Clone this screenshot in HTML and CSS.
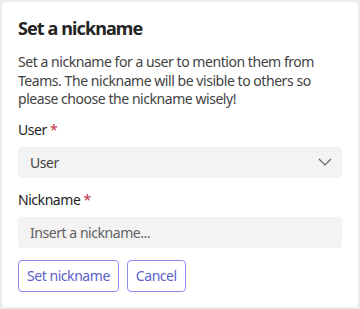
FILE: index.html
```html
<!DOCTYPE html>
<html lang="en">
<head>
<meta charset="utf-8">
<link rel="stylesheet" href="styles.css">
</head>
<body>
<div class="card">
  <h1 class="title">Set a nickname</h1>
  <p class="desc">Set a nickname for a user to mention them from Teams. The nickname will be visible to others so please choose the nickname wisely!</p>
  <div class="field">
    <label class="label">User <span class="req">*</span></label>
    <div class="select">
      <span>User</span>
      <svg class="chev" width="14" height="8" viewBox="0 0 14 8"><path d="M1 1l6 6 6-6" fill="none" stroke="#616161" stroke-width="1.2"/></svg>
    </div>
  </div>
  <div class="field">
    <label class="label">Nickname <span class="req">*</span></label>
    <div class="input">Insert a nickname...</div>
  </div>
  <div class="actions">
    <button class="btn">Set nickname</button>
    <button class="btn">Cancel</button>
  </div>
</div>
</body>
</html>
```
FILE: styles.css
```css
html, body { margin: 0; padding: 0; }
body {
  background: #ececec;
  padding: 2px;
  font-family: "Noto Sans", sans-serif;
  color: #242424;
  width: 360px;
  height: 309px;
  box-sizing: border-box;
  letter-spacing: -0.45px;
}
.card {
  background: #fff;
  border-radius: 4px;
  height: 305px;
  width: 356px;
  box-sizing: border-box;
  padding: 14px 16px 16px 16px;
}
.title {
  margin: 0;
  font-size: 18px;
  line-height: 24px;
  font-weight: 700;
  color: #242424;
  letter-spacing: -0.9px;
}
.desc {
  margin: 13px 0 0 0;
  font-size: 14px;
  line-height: 18.5px;
  color: #424242;
}
.field { margin-top: 11px; }
.field + .field { margin-top: 12px; }
.label {
  display: block;
  font-size: 14px;
  line-height: 20px;
  color: #242424;
}
.req { color: #c4314b; }
.select, .input {
  margin-top: 7px;
  height: 31px;
  background: #f3f3f3;
  border-radius: 4px;
  display: flex;
  align-items: center;
  padding: 0 12px;
  font-size: 14px;
  color: #424242;
}
.select { justify-content: space-between; }
.chev { margin-right: -2px; }
.input { color: #616161; }
.actions {
  margin-top: 12px;
  display: flex;
  gap: 8px;
}
.btn {
  height: 32px;
  padding: 0 8px;
  background: #fff;
  border: 1px solid #8b8cf2;
  border-radius: 4px;
  font-family: inherit;
  font-size: 14px;
  letter-spacing: -0.45px;
  color: #5b5fc7;
}
```
